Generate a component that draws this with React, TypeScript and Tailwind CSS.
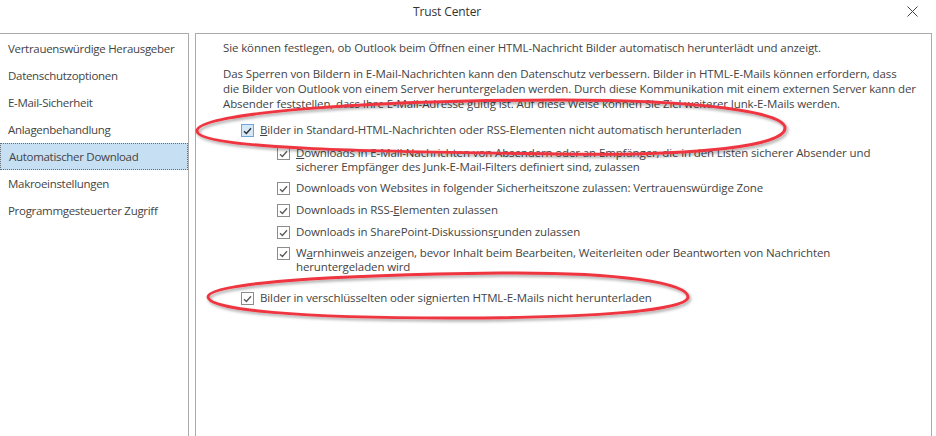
import React from 'react';

const font = { fontFamily: '"Segoe UI", "Open Sans", "Noto Sans", sans-serif' };

const menu = [
  'Vertrauenswürdige Herausgeber',
  'Datenschutzoptionen',
  'E-Mail-Sicherheit',
  'Anlagenbehandlung',
  'Automatischer Download',
  'Makroeinstellungen',
  'Programmgesteuerter Zugriff',
];

function Check({ focused }: { focused?: boolean }) {
  return (
    <span
      className={
        'mt-[1px] flex h-[13px] w-[13px] shrink-0 items-center justify-center border ' +
        (focused ? 'border-[#6fa6d6] bg-[#d4e8f8]' : 'border-[#8c8c8c] bg-white')
      }
    >
      <svg width="9" height="8" viewBox="0 0 9 8">
        <path d="M1 4.2 L3.4 6.5 L8 1.2" fill="none" stroke={focused ? '#2b2b2b' : '#5a5a5a'} strokeWidth="1.3" />
      </svg>
    </span>
  );
}

function Row({ focused, sub, className, children }: { focused?: boolean; sub?: boolean; className?: string; children: React.ReactNode }) {
  return (
    <div className={'flex items-start gap-[6px] leading-[14px] ' + (sub ? 'pl-[54px] ' : 'pl-[18px] ') + (className || '')}>
      <Check focused={focused} />
      <div>{children}</div>
    </div>
  );
}

export default function App() {
  return (
    <div className="relative h-[436px] w-[936px] overflow-hidden bg-white text-[11.5px] tracking-[-0.12px] text-[#444]" style={font}>
      {/* title bar */}
      <div className="relative flex h-[33px] items-start justify-center pt-[3px] text-[12px] text-[#333]">
        <span className="ml-[-42px]">Trust Center</span>
        <svg className="absolute right-[18px] top-[6px]" width="11" height="11" viewBox="0 0 11 11">
          <path d="M0.5 0.5 L10.5 10.5 M10.5 0.5 L0.5 10.5" stroke="#444" strokeWidth="1" />
        </svg>
      </div>

      <div className="flex gap-[6px]">
        {/* left nav */}
        <div className="h-[403px] w-[189px] shrink-0 border-r border-t border-[#ababab] pt-[1px] tracking-[-0.3px]">
          {menu.map((m) => (
            <div
              key={m}
              className={
                'flex h-[27px] items-center whitespace-nowrap pl-[8px] ' +
                (m === 'Automatischer Download' ? 'border border-dotted border-[#6a6a6a] bg-[#c7dff3] pl-[7px]' : '')
              }
            >
              {m}
            </div>
          ))}
        </div>

        {/* content */}
        <div className="h-[403px] w-[737px] border-l border-r border-t border-[#ababab] pl-[27px] pt-[6px] leading-[15px] whitespace-nowrap">
          <p>Sie können festlegen, ob Outlook beim Öffnen einer HTML-Nachricht Bilder automatisch herunterlädt und anzeigt.</p>
          <p className="mt-[11px]">
            Das Sperren von Bildern in E-Mail-Nachrichten kann den Datenschutz verbessern. Bilder in HTML-E-Mails können erfordern, dass
            <br />
            die Bilder von Outlook von einem Server heruntergeladen werden. Durch diese Kommunikation mit einem externen Server kann der
            <br />
            Absender feststellen, dass Ihre E-Mail-Adresse gültig ist. Auf diese Weise können Sie Ziel weiterer Junk-E-Mails werden.
          </p>

          <Row focused className="mt-[12px]">
            <u>B</u>ilder in Standard-HTML-Nachrichten oder RSS-Elementen nicht automatisch herunterladen
          </Row>
          <Row sub className="mt-[9px]">
            <u>D</u>ownloads in E-Mail-Nachrichten von Absendern oder an Empfänger, die in den Listen sicherer Absender und
            <br />
            sicherer Empfänger des Junk-E-Mail-Filters definiert sind, zulassen
          </Row>
          <Row sub className="mt-[7px]">
            Downloads von Websites in folgender Sicherheitszone zulassen: Vertrauenswürdige Zone
          </Row>
          <Row sub className="mt-[8px]">
            Downloads in RSS-<u>E</u>lementen zulassen
          </Row>
          <Row sub className="mt-[8px]">
            Downloads in SharePoint-Diskussions<u>r</u>unden zulassen
          </Row>
          <Row sub className="mt-[7px]">
            W<u>a</u>rnhinweis anzeigen, bevor Inhalt beim Bearbeiten, Weiterleiten oder Beantworten von Nachrichten
            <br />
            heruntergeladen wird
          </Row>
          <Row className="mt-[17px]">Bilder in verschlüsselten oder signierten HTML-E-Mails nicht herunterladen</Row>
        </div>
      </div>

      {/* red annotation ellipses */}
      <svg className="pointer-events-none absolute left-0 top-0" width="936" height="436">
        <defs>
          <filter id="sh" x="-10%" y="-50%" width="120%" height="200%">
            <feDropShadow dx="1.5" dy="2" stdDeviation="1.5" floodColor="#000" floodOpacity="0.35" />
          </filter>
        </defs>
        <g fill="none" stroke="#ee3641" strokeWidth="3" filter="url(#sh)">
          <path d="M197 131 C196 112 380 100 560 100 C700 100 785 112 785 128 C785 146 700 156 560 154 C400 152 198 150 197 131 Z" />
          <path d="M208 297 C208 283 330 275 500 273 C620 272 688 283 688 297 C688 310 600 318 450 318 C300 318 208 310 208 297 Z" />
        </g>
      </svg>
    </div>
  );
}
